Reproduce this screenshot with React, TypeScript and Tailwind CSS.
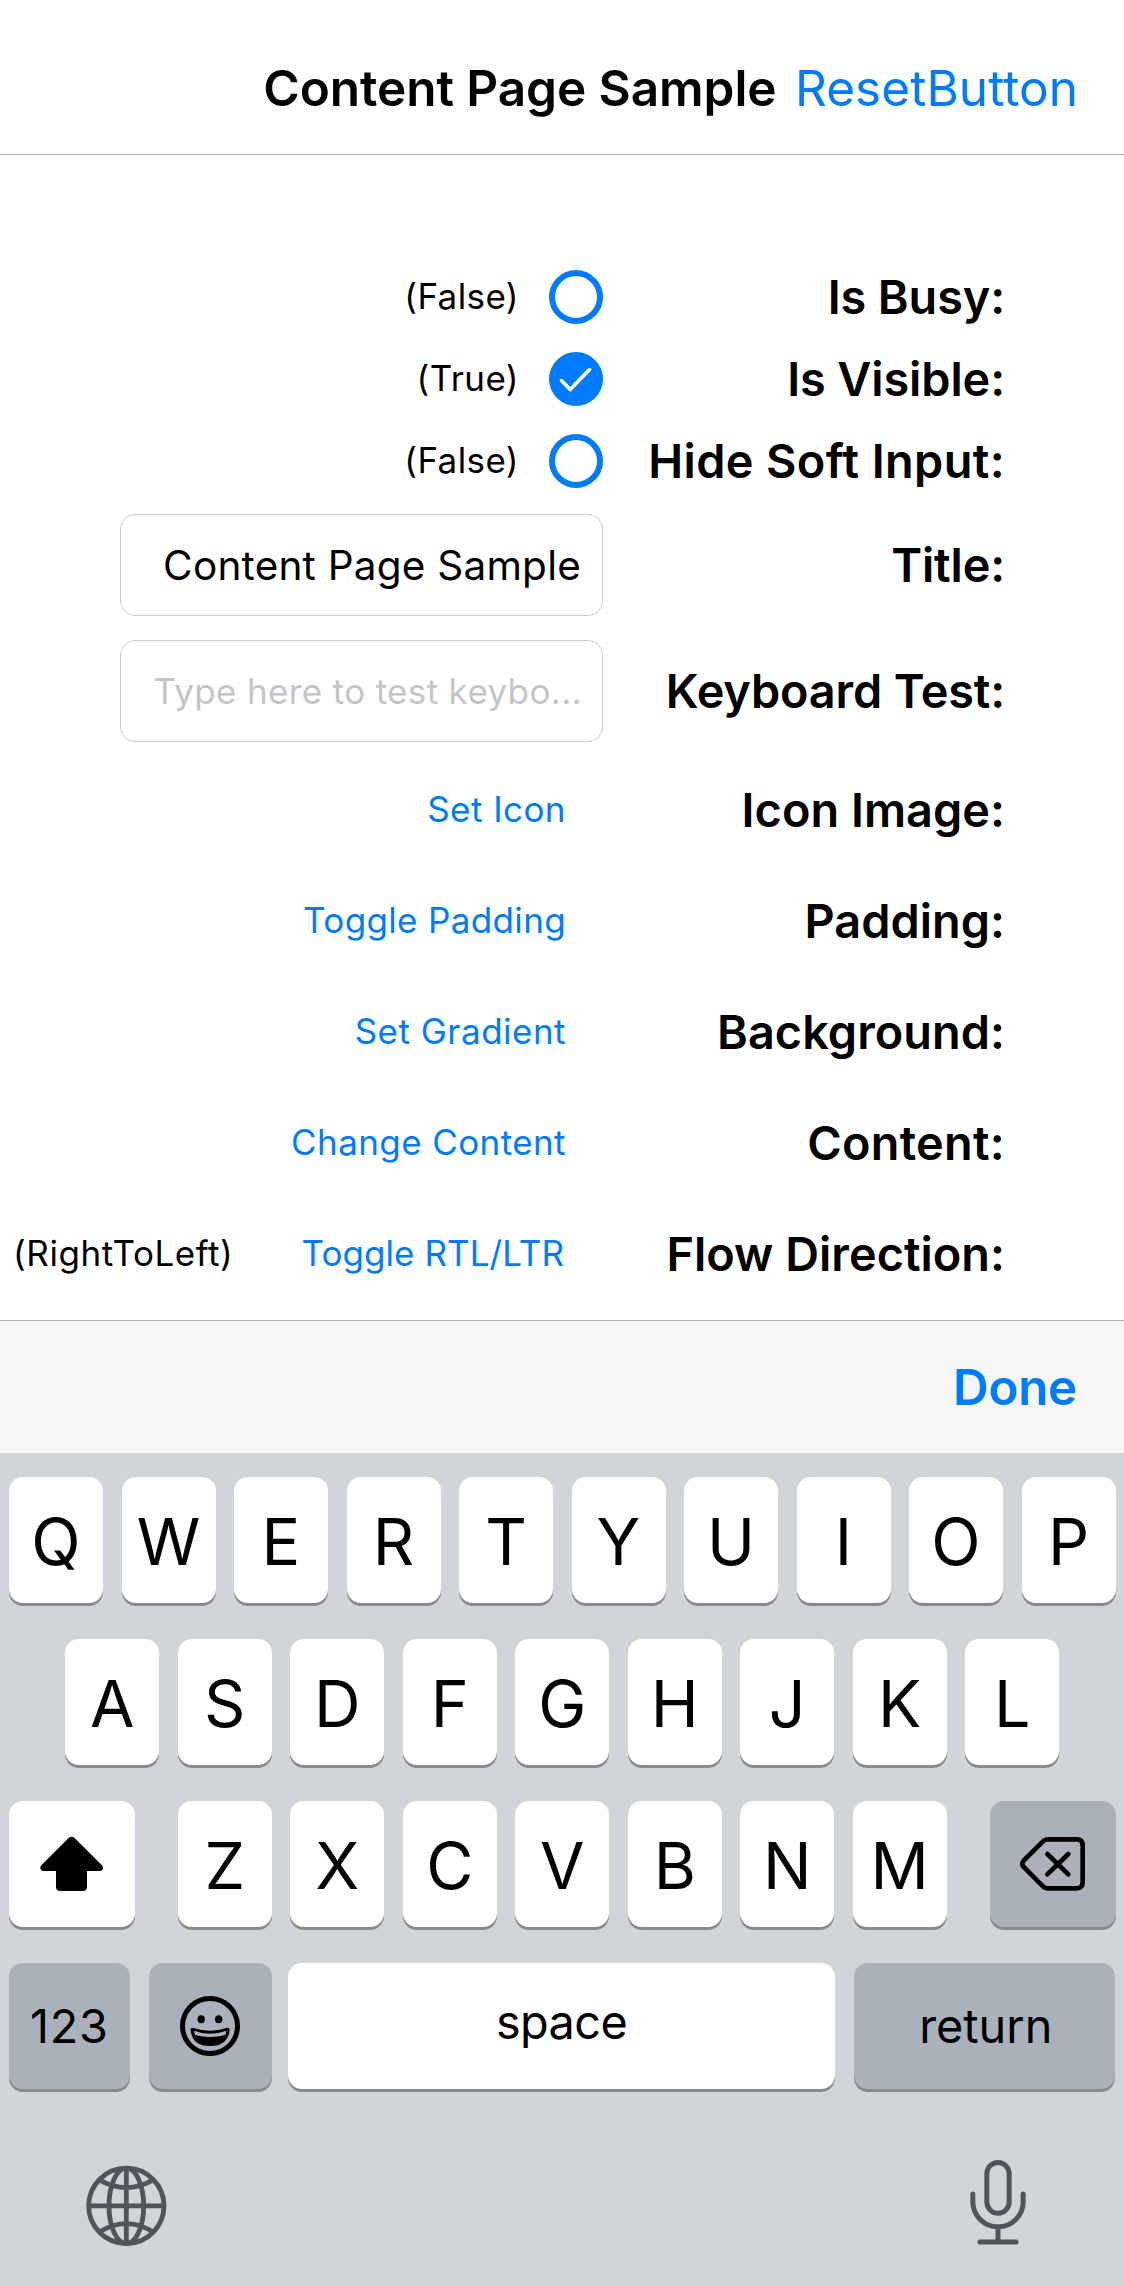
import type { ReactNode } from "react";

function FieldRow({ label, height, tracking = "", children }: { label: string; height: string; tracking?: string; children: ReactNode }) {
  return (
    <div className={`flex items-center ${height}`}>
      <div className="flex w-[603px] shrink-0 items-center justify-end">{children}</div>
      <div className={`w-[402px] shrink-0 whitespace-nowrap text-right text-[46.8px] font-semibold leading-[60px] ${tracking}`}>
        {label}
      </div>
    </div>
  );
}

function CheckRow({ label, checked, tracking }: { label: string; checked: boolean; tracking: string }) {
  return (
    <FieldRow label={label} height="h-[82px]" tracking={tracking}>
      <span className="pb-[2px] text-[35px] leading-[46px] tracking-[0.4px]">{checked ? "(True)" : "(False)"}</span>
      {checked ? (
        <span className="ml-[30px] flex size-[54px] items-center justify-center rounded-full bg-[#007aff]">
          <svg width="54" height="54" viewBox="0 0 54 54" fill="none" stroke="white" strokeWidth="3.6" strokeLinecap="round" strokeLinejoin="round">
            <path d="M12.4 28.6 21.2 37.6 40.6 17.6" />
          </svg>
        </span>
      ) : (
        <span className="ml-[30px] size-[54px] rounded-full border-6 border-[#007aff]" />
      )}
    </FieldRow>
  );
}

function ActionRow({ label, action, note, tracking, actionTracking }: { label: string; action: string; note?: string; tracking: string; actionTracking: string }) {
  return (
    <FieldRow label={label} height="h-[111px]" tracking={tracking}>
      <div className="flex w-full items-center pb-[2px] pl-[13px] pr-[37px] text-[35px] leading-[46px]">
        {note && <span className="tracking-[0.55px]">{note}</span>}
        <button className={`ml-auto whitespace-nowrap text-[#007aff] ${actionTracking}`}>{action}</button>
      </div>
    </FieldRow>
  );
}

function Key({ width = "w-[94px]", dark = false, className = "", children }: { width?: string; dark?: boolean; className?: string; children: ReactNode }) {
  return (
    <button
      className={`flex h-[126px] shrink-0 items-center justify-center rounded-[14px] shadow-[0_3px_0_#898a8d] ${dark ? "bg-[#abb1bb]" : "bg-white"} ${width} ${className}`}
    >
      {children}
    </button>
  );
}

function LetterKeys({ letters }: { letters: string }) {
  return (
    <div className="flex gap-[18.5px]">
      {letters.split("").map((letter) => (
        <Key key={letter} className="pt-[4px] text-[64.5px] leading-[80px]">
          {letter}
        </Key>
      ))}
    </div>
  );
}

function ShiftIcon() {
  return (
    <svg width="63.3" height="55.3" viewBox="0 0 190 166">
      <path d="M86 6Q95-2 104 6L186 88Q190 93 189 98 187 105 179 105H141V152Q141 165 128 165H61Q48 165 48 152V105H11Q3 105 1 98 0 93 4 88Z" />
    </svg>
  );
}

function DeleteIcon() {
  return (
    <svg width="65" height="53.7" viewBox="0 0 195 161" fill="none" stroke="black" strokeWidth="14" strokeLinecap="round">
      <path d="M83 7H170Q188 7 188 25V136Q188 154 170 154H83Q75 154 69 148L11 90Q3 81 11 71L69 13Q75 7 83 7Z" />
      <path d="M82 51 145 112M145 51 82 112" />
    </svg>
  );
}

function EmojiIcon() {
  return (
    <svg width="60" height="60" viewBox="0 0 180 180">
      <circle cx="90" cy="90" r="82.5" fill="none" stroke="black" strokeWidth="15" />
      <ellipse cx="63.5" cy="70" rx="11" ry="12" />
      <ellipse cx="116" cy="70" rx="11" ry="12" />
      <path
        fillRule="evenodd"
        d="M38 95Q90 113 142 95 149 94 149 102 144 150 90 150 36 150 32 102 31 94 38 95ZM41 104Q90 122 139 104L136 117Q90 129 45 117Z"
      />
    </svg>
  );
}

function GlobeIcon() {
  return (
    <svg width="130" height="130" viewBox="0 0 390 390" fill="none" stroke="#50555c" strokeWidth="14.5">
      <circle cx="199" cy="197.500" r="113" />
      <ellipse cx="199" cy="197.500" rx="52" ry="113" />
      <path d="M199 85V311M87 197.500H313M117 119Q199 167 281 119M117 277Q199 225 281 277" />
    </svg>
  );
}

function MicIcon() {
  return (
    <svg width="130" height="130" viewBox="0 0 390 390" fill="none" stroke="#50555c" strokeWidth="15" strokeLinecap="round">
      <rect x="140.500" y="67.500" width="67" height="152" rx="33.500" />
      <path d="M98.500 162V185A75.500 75.500 0 0 0 249.500 185V162M174 261V306M120 306H228" />
    </svg>
  );
}

export default function App() {
  return (
    <div className="flex h-[2286px] w-[1124px] flex-col overflow-hidden bg-white font-['Inter',sans-serif] text-black">
      <header className="flex h-[155px] shrink-0 items-center justify-end border-b border-[#b3b3b3] pr-[46px] pt-[22px] text-[49.5px] leading-[64px]">
        <h1 className="mr-[18.5px] whitespace-nowrap font-semibold tracking-[-0.06px]">Content Page Sample</h1>
        <button className="tracking-[0.05px] text-[#007aff]">ResetButton</button>
      </header>

      <main className="h-[1165px] shrink-0 pt-[101px]">
        <CheckRow label="Is Busy:" checked={false} tracking="tracking-[-0.1px]" />
        <CheckRow label="Is Visible:" checked tracking="tracking-[-0.08px]" />
        <CheckRow label="Hide Soft Input:" checked={false} tracking="tracking-[0.4px]" />
        <FieldRow label="Title:" height="h-[126px]" tracking="tracking-[-0.13px]">
          <div className="flex h-[102px] w-[483px] items-center justify-end rounded-[15px] border border-[#cbcbcb] pr-[21px] pt-[2px] text-[40.5px] leading-[52px] tracking-[0.22px]">
            Content Page Sample
          </div>
        </FieldRow>
        <FieldRow label="Keyboard Test:" height="h-[126px]" tracking="tracking-[-0.14px]">
          <div className="flex h-[102px] w-[483px] items-center justify-end whitespace-nowrap rounded-[15px] border border-[#cbcbcb] pr-[20px] text-[35px] leading-[46px] tracking-[0.34px] text-[#c5c5c7]">
            Type here to test keybo...
          </div>
        </FieldRow>
        <ActionRow label="Icon Image:" action="Set Icon" tracking="tracking-[0.04px]" actionTracking="tracking-[0.45px]" />
        <ActionRow label="Padding:" action="Toggle Padding" tracking="tracking-[0.04px]" actionTracking="tracking-[0.35px]" />
        <ActionRow label="Background:" action="Set Gradient" tracking="tracking-[0.06px]" actionTracking="tracking-[0.48px]" />
        <ActionRow label="Content:" action="Change Content" tracking="tracking-[0.3px]" actionTracking="tracking-[0.41px]" />
        <ActionRow label="Flow Direction:" action="Toggle RTL/LTR" note="(RightToLeft)" tracking="tracking-[0.04px]" actionTracking="mr-[2px] tracking-[0.07px]" />
      </main>

      <div className="flex h-[133px] shrink-0 items-center justify-end border-t border-[#b0b0b1] bg-[#f6f6f7] pr-[47px]">
        <button className="text-[49.5px] font-semibold leading-[64px] tracking-[-0.39px] text-[#007aff]">Done</button>
      </div>

      <section className="flex grow flex-col bg-[#d1d4d9] pt-6">
        <div className="flex flex-col gap-9 pl-[9px] pr-[8.5px]">
          <LetterKeys letters="QWERTYUIOP" />
          <div className="flex justify-center">
            <LetterKeys letters="ASDFGHJKL" />
          </div>
          <div className="flex justify-between">
            <Key width="w-[126px]">
              <ShiftIcon />
            </Key>
            <LetterKeys letters="ZXCVBNM" />
            <Key width="w-[126px]" dark>
              <DeleteIcon />
            </Key>
          </div>
          <div className="flex text-[46.8px] leading-[60px]">
            <Key width="w-[120.5px]" dark className="tracking-[0.7px]">
              123
            </Key>
            <Key width="w-[123px]" dark className="ml-[19px]">
              <EmojiIcon />
            </Key>
            <Key width="w-[547px]" className="ml-[16.5px] pb-[8px] tracking-[-0.58px]">
              space
            </Key>
            <Key width="w-[261.5px]" dark className="ml-[18.5px] pl-[3px]">
              return
            </Key>
          </div>
        </div>
        <div className="mt-[51px] flex justify-between pl-[60px] pr-[54px]">
          <GlobeIcon />
          <MicIcon />
        </div>
      </section>
    </div>
  );
}
